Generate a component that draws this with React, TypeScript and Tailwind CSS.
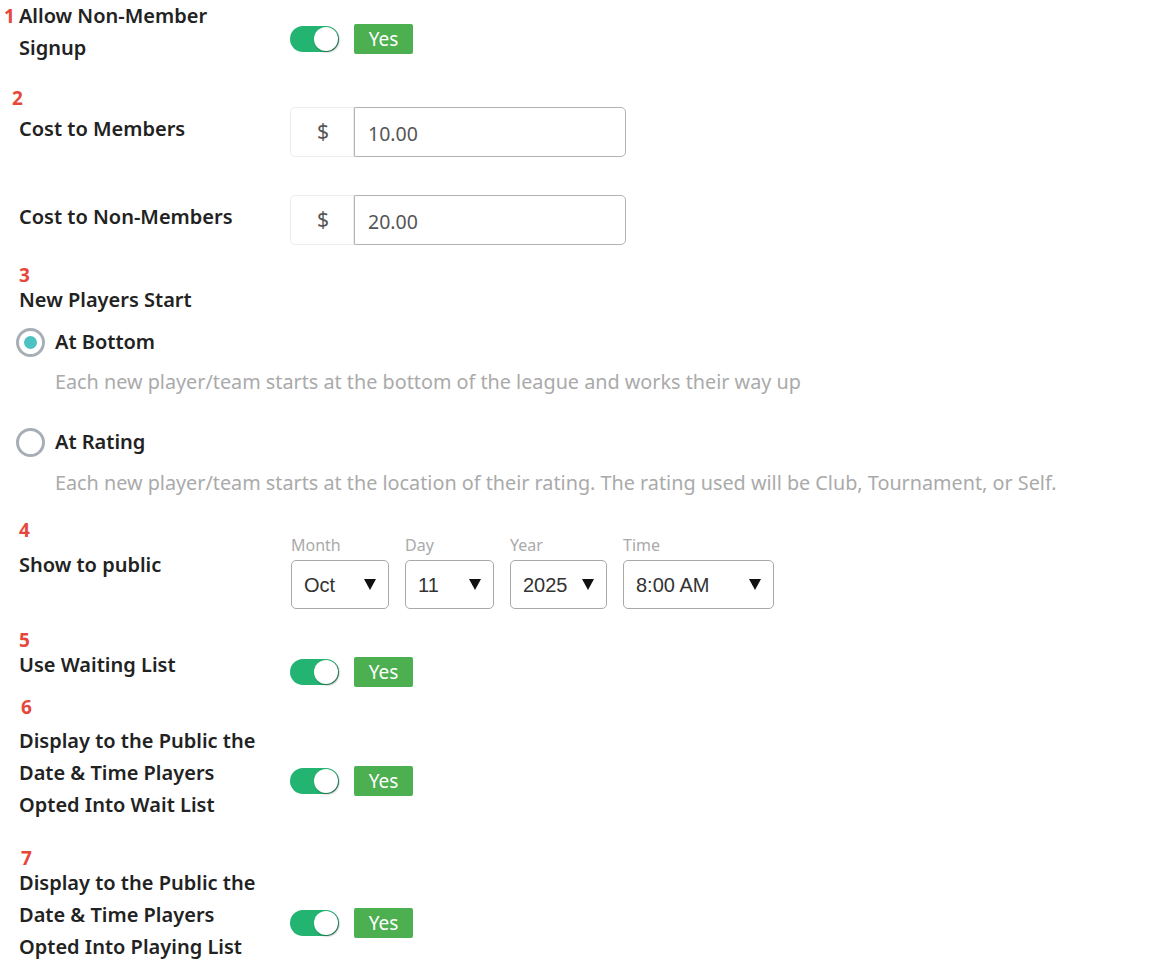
import React from "react";

const font = { fontFamily: '"Noto Sans", "Open Sans", sans-serif' };

function Num({ n, className = "" }: { n: string; className?: string }) {
  return (
    <div className={`h-[18px] text-[19px] leading-[18px] font-bold text-[#e5483a] ${className}`}>
      {n}
    </div>
  );
}

function Toggle() {
  return (
    <div className="flex items-center gap-[15px]">
      <div className="relative h-[26px] w-[49px] rounded-full bg-[#23b472]">
        <div className="absolute right-[1px] top-[1px] h-[24px] w-[24px] rounded-full bg-white shadow-[1px_1px_2px_rgba(0,0,0,0.45)]" />
      </div>
      <div className="flex h-[30px] w-[59px] items-center justify-center rounded-[2px] bg-[#4caf50] text-[19px] text-white">
        Yes
      </div>
    </div>
  );
}

function Money({ value }: { value: string }) {
  return (
    <div className="flex h-[50px]">
      <div className="flex w-[64px] items-center justify-center rounded-l-[5px] border border-[#ececec] pl-[2px] text-[21px] text-[#555]">
        $
      </div>
      <div className="flex w-[272px] items-center rounded-r-[5px] border border-[#b3b3b3] pl-[13px] pt-[3px] text-[19.5px] text-[#555]">
        {value}
      </div>
    </div>
  );
}

function Select({ label, value, w }: { label: string; value: string; w: string }) {
  return (
    <div className="flex flex-col">
      <div className="h-[20px] text-[16px] leading-[20px] text-[#aaa]">{label}</div>
      <div
        className={`mt-[5px] flex h-[49px] items-center justify-between rounded-[5px] border border-[#a9a9a9] pl-[12px] pr-[12px] ${w}`}
      >
        <span className="text-[20px] text-[#333]" style={{ fontFamily: '"Liberation Sans", Arial, sans-serif' }}>
          {value}
        </span>
        <svg width="12" height="11" viewBox="0 0 12 11">
          <path d="M0 0 H12 L6 11 Z" fill="#111" />
        </svg>
      </div>
    </div>
  );
}

function Radio({ checked, label }: { checked: boolean; label: string }) {
  return (
    <div className="flex h-[32px] items-center">
      <div className="-ml-[3px] flex h-[29px] w-[29px] items-center justify-center rounded-full border-[3px] border-[#a7aeb5] bg-white">
        {checked && <div className="h-[13px] w-[13px] rounded-full bg-[#4cc2c2]" />}
      </div>
      <span className="ml-[10px] text-[20px] font-semibold text-[#222]">{label}</span>
    </div>
  );
}

export default function App() {
  const label = "w-[272px] shrink-0 text-[20px] font-semibold leading-[32px] text-[#222]";
  const desc = "pl-[36px] text-[19.8px] leading-[28px] text-[#aaa]";
  return (
    <div className="min-h-screen bg-white pl-[19px]" style={font}>
      {/* 1 */}
      <div className="flex">
        <div className={label}>
          <span className="-ml-[15px] mr-[4px] text-[19px] font-bold text-[#e5483a]">1</span>
          Allow Non-Member
          <br />
          Signup
        </div>
        <div className="-ml-[1px] mt-[24px]">
          <Toggle />
        </div>
      </div>

      {/* 2 */}
      <Num n="2" className="-ml-[7px] mt-[25px]" />
      <div className="flex">
        <div className={`${label} mt-[6px]`}>Cost to Members</div>
        <div className="-ml-[1px]">
          <Money value="10.00" />
        </div>
      </div>
      <div className="mt-[38px] flex">
        <div className={`${label} mt-[6px]`}>Cost to Non-Members</div>
        <div className="-ml-[1px]">
          <Money value="20.00" />
        </div>
      </div>

      {/* 3 */}
      <Num n="3" className="mt-[21px]" />
      <div className={label}>New Players Start</div>
      <div className="mt-[10px]">
        <Radio checked label="At Bottom" />
      </div>
      <div className={`mt-[10px] ${desc}`}>
        Each new player/team starts at the bottom of the league and works their way up
      </div>
      <div className="mt-[30px]">
        <Radio checked={false} label="At Rating" />
      </div>
      <div className={`mt-[11px] ${desc}`}>
        Each new player/team starts at the location of their rating. The rating used will be Club, Tournament, or Self.
      </div>

      {/* 4 */}
      <Num n="4" className="mt-[24px]" />
      <div className="-mt-[4px] flex">
        <div className={`${label} mt-[14px]`}>Show to public</div>
        <div className="flex gap-[16px]">
          <Select label="Month" value="Oct" w="w-[98px]" />
          <Select label="Day" value="11" w="w-[89px]" />
          <Select label="Year" value="2025" w="w-[97px]" />
          <Select label="Time" value="8:00 AM" w="w-[151px]" />
        </div>
      </div>

      {/* 5 */}
      <Num n="5" className="mt-[22px]" />
      <div className="flex">
        <div className={label}>Use Waiting List</div>
        <div className="-ml-[1px] mt-[8px]">
          <Toggle />
        </div>
      </div>

      {/* 6 */}
      <Num n="6" className="ml-[2px] mt-[11px]" />
      <div className="mt-[9px] flex">
        <div className={label}>
          Display to the Public the
          <br />
          Date &amp; Time Players
          <br />
          Opted Into Wait List
        </div>
        <div className="-ml-[1px] mt-[41px]">
          <Toggle />
        </div>
      </div>

      {/* 7 */}
      <Num n="7" className="ml-[2px] mt-[28px] h-[14px]" />
      <div className="flex">
        <div className={label}>
          Display to the Public the
          <br />
          Date &amp; Time Players
          <br />
          Opted Into Playing List
        </div>
        <div className="-ml-[1px] mt-[41px]">
          <Toggle />
        </div>
      </div>
    </div>
  );
}
